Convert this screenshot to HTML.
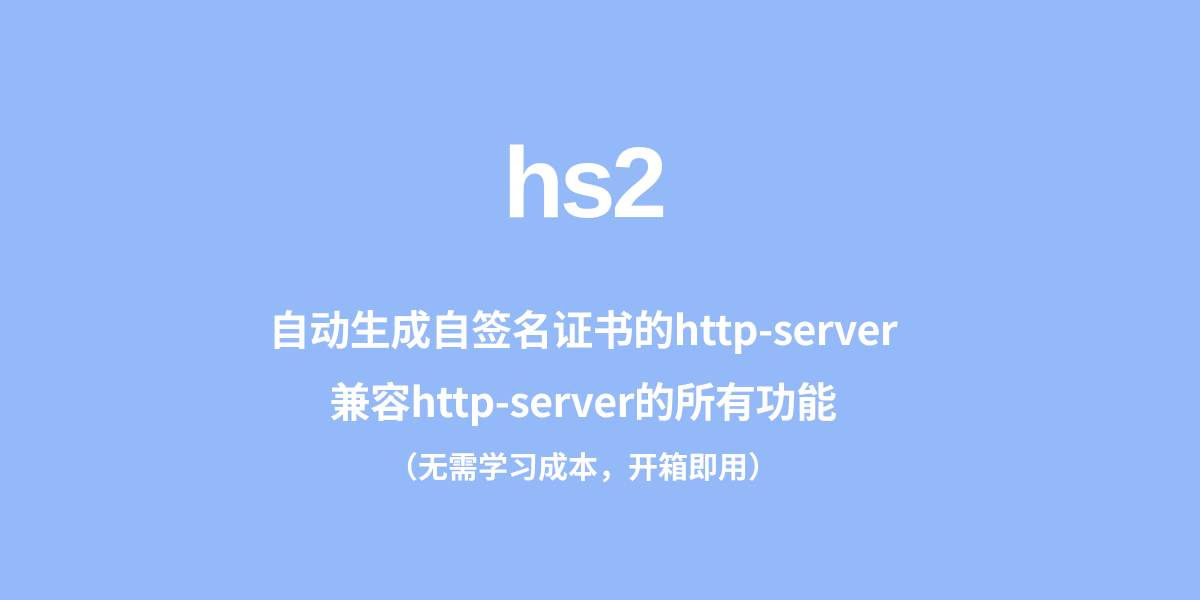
<!DOCTYPE html>
<html><head><meta charset="utf-8"><style>
html,body{margin:0;padding:0}
body{width:1200px;height:600px;background:#94b9f9;color:#fff;font-family:"Noto Sans CJK SC","Liberation Sans",sans-serif;font-weight:bold;position:relative;overflow:hidden}
div{position:absolute;left:-17px;width:1200px;text-align:center;white-space:nowrap}
.t{top:118px;font-size:100px;line-height:130px;font-family:"Liberation Sans","Noto Sans CJK SC",sans-serif;letter-spacing:-4px}
.a{top:303px;font-size:41px;line-height:48px;letter-spacing:-0.5px}
.b{top:375px;font-size:41px;line-height:48px;letter-spacing:-0.5px}
.c{top:445px;font-size:30px;line-height:40px}
</style></head><body>
<div class="t">hs2</div>
<div class="a">自动生成自签名证书的http-server</div>
<div class="b">兼容http-server的所有功能</div>
<div class="c">（无需学习成本，开箱即用）</div>
</body></html>
